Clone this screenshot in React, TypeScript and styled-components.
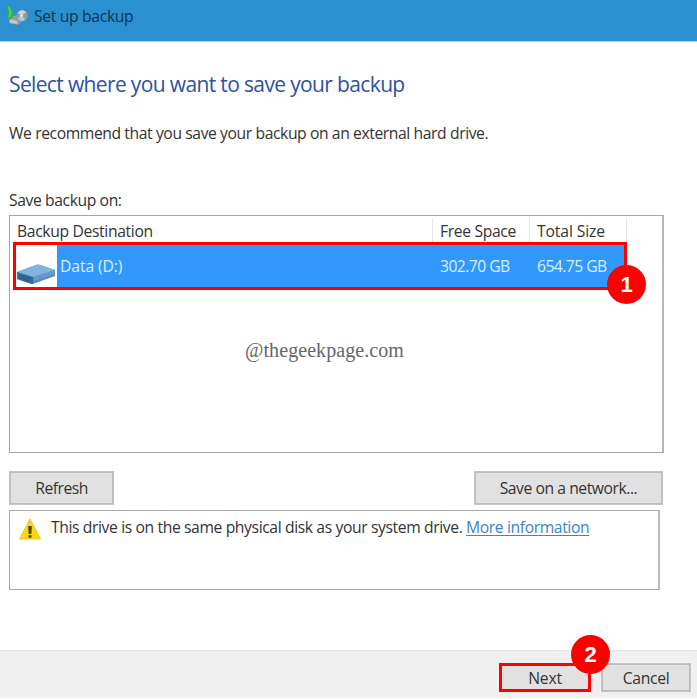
import React from "react";
import styled, { createGlobalStyle } from "styled-components";

const GlobalStyle = createGlobalStyle`
  *, *::before, *::after { box-sizing: border-box; }
  body { margin: 0; background: #fff; overflow: hidden; }
  svg { display: block; }
`;

const Dialog = styled.div`
  display: flex;
  flex-direction: column;
  width: 697px;
  height: 699px;
  background: #fefefe;
  color: #333;
  font: 15.7px/20px "Open Sans", "Noto Sans", sans-serif;
  white-space: nowrap;
  border-bottom: 1px solid #fdfdfd;
`;

const TitleBar = styled.header`
  display: flex;
  align-items: flex-start;
  height: 42px;
  padding: 5px 0 0 6px;
  background: #2a90cf;
  border-bottom: 1px solid #a4d3ee;
  color: #0b3450;
`;

const Text = styled.span<{ $track?: number }>`
  letter-spacing: ${(p) => p.$track ?? -0.4}px;
`;

const TitleText = styled(Text)`
  margin: 1px 0 0 5px;
`;

const Body = styled.main`
  flex: 1;
  padding: 0 0 0 9px;
`;

const Heading = styled.h1`
  margin: 27px 0 0;
  font-size: 21px;
  line-height: 30px;
  font-weight: 400;
  color: #2b539f;
`;

const Paragraph = styled.p<{ $top: number }>`
  margin: ${(p) => p.$top}px 0 0;
`;

const DriveList = styled.section`
  width: 655px;
  height: 238px;
  margin-top: 5px;
  padding: 2px 3px;
  border: 1px solid #a5a5a5;
  border-right: 2px solid #b5b5b5;
  background: #fff;
`;

const HeaderRow = styled.div`
  display: grid;
  grid-template-columns: 420px 97px 97px;
  height: 24px;
`;

const HeaderCell = styled.div<{ $left: number }>`
  padding: 3px 0 0 ${(p) => p.$left}px;
  border-right: 1px solid #e5e5e5;
`;

const DriveRow = styled.div`
  position: relative;
  display: grid;
  grid-template-columns: 41px 380px 97px 1fr;
  width: 614px;
  height: 48px;
  border: 3px solid #f00;
  background: #3398fe;
  color: #d9f0ff;
`;

const DriveIconCell = styled.div`
  padding: 18px 0 0 1px;
  background: #fff;
`;

const DriveCell = styled.div<{ $left: number }>`
  padding: 11px 0 0 ${(p) => p.$left}px;
`;

const Badge = styled.span<{ $right: number; $top: number }>`
  position: absolute;
  z-index: 1;
  right: ${(p) => p.$right}px;
  top: ${(p) => p.$top}px;
  width: 39px;
  height: 39px;
  border-radius: 50%;
  background: #f00;
  color: #fff;
  font: 700 22px/39px "Liberation Sans", Arial, sans-serif;
  text-align: center;
`;

const Watermark = styled.div`
  margin: 49px 0 0 232px;
  color: #666;
  font: 20px/22px "Liberation Serif", "Times New Roman", serif;
  letter-spacing: 0.07px;
`;

const Actions = styled.div`
  display: flex;
  justify-content: space-between;
  width: 654px;
  margin-top: 18px;
`;

const Button = styled.button<{ $width: number; $height: number; $focus?: boolean }>`
  position: relative;
  width: ${(p) => p.$width}px;
  height: ${(p) => p.$height}px;
  padding: 0;
  border: ${(p) => (p.$focus ? "3px solid #f00" : "1px solid #c4c4c4")};
  box-shadow: ${(p) => (p.$focus ? "none" : "inset 0 0 0 1px #bcbcbc")};
  background: #e1e1e1;
  color: #333;
  font: inherit;
`;

const Notice = styled.section`
  display: flex;
  align-items: flex-start;
  width: 651px;
  height: 80px;
  margin-top: 5px;
  padding: 6px 0 0 9px;
  border: 1px solid #aaa;
  border-right-width: 2px;
  border-right-color: #bbb;
  background: #fff;
`;

const NoticeText = styled(Text)`
  margin-left: 9px;
`;

const Link = styled.a`
  color: #3b82d6;
  text-decoration: underline;
  text-underline-offset: 2px;
`;

const Footer = styled.footer`
  display: flex;
  justify-content: flex-end;
  gap: 10px;
  height: 48px;
  padding: 12px 6px 0 0;
  border-top: 1px solid #e5e5e5;
  background: #f0f0f0;
`;

const BackupIcon = () => (
  <svg width="23" height="22" viewBox="0 0 23 22">
    <path d="M3 9 8 11 12 10 17 15 12 20 3 18Z" fill="#9a9b99" />
    <path d="M4 14 11 16 12 19 4 18Z" fill="#c6c8c6" />
    <ellipse cx="16" cy="10.5" rx="5.7" ry="5.8" fill="#8e9caa" />
    <path d="M12 8Q15 3 20 7L16 10Z" fill="#ced6df" />
    <path d="M16 10 21 8 21 13Z" fill="#aa957c" />
    <path d="M12 13 16 10 19 15Q15 18 12 13Z" fill="#a8cde9" />
    <circle cx="15.5" cy="10.5" r="1.7" fill="#d9dbe3" />
    <path d="M1 0Q5 1 6.8 6V13L4 15 1 12 2 8Z" fill="#35b64a" />
    <path d="M2.5 2 4.5 7 3.5 12" fill="none" stroke="#70dc68" />
  </svg>
);

const DriveIcon = () => (
  <svg width="39" height="22" viewBox="0 0 39 22">
    <path d="M0 9 19 2Q21 1 23 2L38 7V13L17 20.5Q15 21.5 13 20.5L0 16Z" fill="#5789bb" />
    <path d="M0 9 19 2Q21 1 23 2L38 7 16 14Z" fill="#83b3df" />
    <path d="M0 9 16 14V21Q14 21 12 20L0 16Z" fill="#376f98" />
    <path d="M2 12 14 16M2 14 12 18" stroke="#1e587f" strokeWidth="1.2" />
    <path d="M17 14 38 7V11L17 18Z" fill="#6798cd" />
  </svg>
);

const WarningIcon = () => (
  <svg width="23" height="23" viewBox="0 0 23 23">
    <path d="M11 2 21.5 22H0.5Z" fill="#fbd912" stroke="#edc52e" strokeWidth="1" strokeLinejoin="round" />
    <path d="M9.2 9H12.8L12.3 17H9.7Z" fill="#4a431b" />
    <rect x="9.5" y="18.2" width="3" height="2.5" fill="#4a431b" />
  </svg>
);

export default function App() {
  return (
    <>
      <GlobalStyle />
      <Dialog>
        <TitleBar>
          <BackupIcon />
          <TitleText $track={-0.33}>Set up backup</TitleText>
        </TitleBar>
        <Body>
          <Heading><Text $track={-0.64}>Select where you want to save your backup</Text></Heading>
          <Paragraph $top={24}><Text $track={-0.41}>We recommend that you save your backup on an external hard drive.</Text></Paragraph>
          <Paragraph $top={47}><Text>Save backup on:</Text></Paragraph>
          <DriveList>
            <HeaderRow>
              <HeaderCell $left={4}><Text $track={-0.35}>Backup Destination</Text></HeaderCell>
              <HeaderCell $left={7}><Text $track={-0.35}>Free Space</Text></HeaderCell>
              <HeaderCell $left={7}><Text $track={-0.12}>Total Size</Text></HeaderCell>
            </HeaderRow>
            <DriveRow>
              <DriveIconCell><DriveIcon /></DriveIconCell>
              <DriveCell $left={3}><Text $track={-0.1}>Data (D:)</Text></DriveCell>
              <DriveCell $left={3}><Text $track={-0.55}>302.70 GB</Text></DriveCell>
              <DriveCell $left={3}><Text $track={-0.55}>654.75 GB</Text></DriveCell>
              <Badge $right={-22} $top={20}>1</Badge>
            </DriveRow>
            <Watermark>@thegeekpage.com</Watermark>
          </DriveList>
          <Actions>
            <Button $width={105} $height={34}><Text $track={-0.5}>Refresh</Text></Button>
            <Button $width={189} $height={34}><Text $track={-0.45}>Save on a network...</Text></Button>
          </Actions>
          <Notice>
            <WarningIcon />
            <NoticeText $track={-0.39}>This drive is on the same physical disk as your system drive. <Link>More information</Link></NoticeText>
          </Notice>
        </Body>
        <Footer>
          <Button $width={92} $height={29} $focus><Text $track={-0.2}>Next</Text><Badge $right={-22} $top={-31}>2</Badge></Button>
          <Button $width={90} $height={29}><Text $track={-0.3}>Cancel</Text></Button>
        </Footer>
      </Dialog>
    </>
  );
}
